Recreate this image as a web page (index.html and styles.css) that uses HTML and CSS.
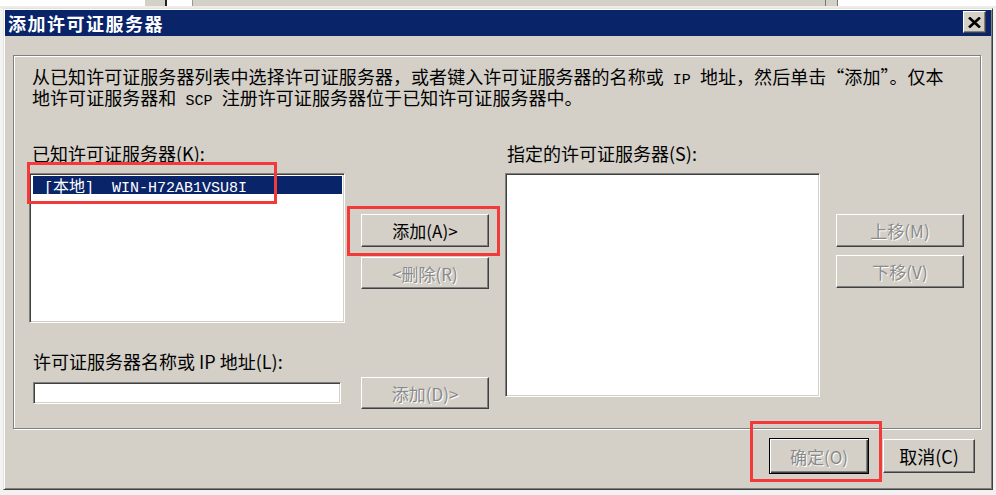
FILE: index.html
```html
<!DOCTYPE html>
<html lang="zh-CN">
<head>
<meta charset="utf-8">
<title>添加许可证服务器</title>
<link rel="stylesheet" href="styles.css">
</head>
<body>
<div class="bg-strip">
  <div class="s-white1"></div>
  <div class="s-gray1"></div>
  <div class="s-field"></div>
  <div class="s-gray2"></div>
  <div class="s-split"></div>
  <div class="s-white2"></div>
</div>
<div class="dialog">
  <div class="titlebar">
    <span class="title">添加许可证服务器</span>
    <button class="close" type="button" aria-label="关闭">
      <svg width="13" height="11" viewBox="0 0 13 11"><path d="M1 0.5 L12 10.5 M12 0.5 L1 10.5" stroke="#000" stroke-width="2.6" fill="none"/></svg>
    </button>
  </div>
  <div class="client">
    <div class="group">
      <div class="desc">
        <div class="desc-line">从已知许可证服务器列表中选择许可证服务器，或者键入许可证服务器的名称或<span class="m"> IP </span>地址，然后单击“添加”。仅本</div>
        <div class="desc-line">地许可证服务器和<span class="m"> SCP </span>注册许可证服务器位于已知许可证服务器中。</div>
      </div>
      <div class="cols">
        <div class="col col-left">
          <div class="label">已知许可证服务器(K):</div>
          <div class="listbox lb-left">
            <div class="item selected"><span class="m">[</span>本地<span class="m">]&nbsp;&nbsp;WIN-H72AB1VSU8I</span></div>
          </div>
          <div class="label label2">许可证服务器名称或 IP 地址(L):</div>
          <div class="textbox"></div>
        </div>
        <div class="col col-mid">
          <button class="btn b-add" type="button">添加(A)&gt;</button>
          <button class="btn disabled b-remove" type="button">&lt;删除(R)</button>
          <button class="btn disabled b-add2" type="button">添加(D)&gt;</button>
        </div>
        <div class="col col-right">
          <div class="label label-r">指定的许可证服务器(S):</div>
          <div class="listbox lb-right"></div>
        </div>
        <div class="col col-btns">
          <button class="btn disabled b-up" type="button">上移(M)</button>
          <button class="btn disabled b-down" type="button">下移(V)</button>
        </div>
      </div>
    </div>
    <div class="footer">
      <button class="btn default disabled" type="button">确定(O)</button>
      <button class="btn cancel" type="button">取消(C)</button>
    </div>
  </div>
</div>
<div class="mark mark-1"></div>
<div class="mark mark-2"></div>
<div class="mark mark-3"></div>
</body>
</html>
```
FILE: styles.css
```css
* { box-sizing: border-box; }
html, body { margin: 0; padding: 0; }
body {
  width: 996px;
  height: 495px;
  overflow: hidden;
  background: #f2f2f2;
  font-family: "Noto Sans CJK SC", "Noto Sans", sans-serif;
  font-size: 18px;
  color: #000;
  position: relative;
}

/* background window remnant */
.bg-strip {
  display: flex;
  height: 8px;
  background: #d4d0c8;
  border-bottom: 2px solid #ecebe6;
}
.s-white1 { width: 145px; height: 6px; background: #fff; }
.s-gray1 { width: 22px; height: 6px; background: #d4d0c8; border-right: 2px solid #222; }
.s-field { width: 26px; height: 6px; background: #fff; border-right: 1px solid #999; }
.s-gray2 { flex: 1; height: 6px; background: #d4d0c8; }
.s-split { width: 13px; height: 6px; border-left: 1px solid #777; border-right: 1px solid #777; background: #d4d0c8; }
.s-white2 { width: 158px; height: 6px; background: #fff; }

/* dialog frame */
.dialog {
  margin-left: 3px;
  width: 990px;
  height: 482px;
  background: #d4d0c8;
  border: 1px solid;
  border-color: #e6e3dd #404040 #404040 #e6e3dd;
  box-shadow: inset 1px 1px 0 #fff, inset -1px -1px 0 #808080;
  padding: 1px;
}

.titlebar {
  height: 26px;
  background: #0a246a;
  display: flex;
  justify-content: space-between;
  align-items: flex-start;
  padding: 0 5px 0 3px;
}
.title {
  color: #fff;
  font-weight: 700;
  font-size: 18px;
  letter-spacing: 1.5px;
  line-height: 26px;
}
.close {
  margin-top: 1px;
  width: 23px;
  height: 22px;
  padding: 0;
  background: #d4d0c8;
  border: 1px solid;
  border-color: #fff #404040 #404040 #fff;
  box-shadow: inset -1px -1px 0 #808080;
  display: flex;
  align-items: center;
  justify-content: center;
}
.close svg { display: block; }

.client {
  height: 452px;
  padding: 19px 0 0 8px;
}

/* etched group box */
.group {
  width: 968px;
  height: 374px;
  border: 1px solid #808080;
  box-shadow: 1px 1px 0 #fff, inset 1px 1px 0 #fff;
  padding: 10px 0 0 15px;
}

.desc {
  padding-left: 3px;
  height: 42px;
  display: flex;
  flex-direction: column;
}
.desc-line {
  height: 21px;
  line-height: 21px;
  white-space: nowrap;
  letter-spacing: 0.05px;
}
.m {
  font-family: "Liberation Mono", monospace;
  font-size: 15px;
  line-height: 1;
}

.cols {
  margin-top: 34px;
  display: flex;
  gap: 16px;
  align-items: flex-start;
}
.col { display: flex; flex-direction: column; align-items: flex-start; }
.col-left { width: 316px; }
.col-mid { width: 128px; }
.col-right { width: 315px; }
.col-btns { width: 128px; }

.label {
  height: 22px;
  line-height: 22px;
  padding-left: 3px;
  white-space: nowrap;
}
.label-r { padding-left: 2px; }
.label2 { margin-top: 27px; padding-left: 4px; }

.listbox {
  width: 100%;
  background: #fff;
  border: 1px solid;
  border-color: #808080 #fff #fff #808080;
  box-shadow: inset 1px 1px 0 #404040, inset -1px -1px 0 #d4d0c8;
  padding: 2px 2px 0 2px;
  margin-top: 9px;
}
.lb-left { height: 150px; }
.lb-right { height: 224px; }

.item {
  height: 18px;
  line-height: 18px;
  font-size: 16px;
  padding-left: 11px;
  margin-left: 1px;
  white-space: nowrap;
}
.item .m { font-size: 15px; }
.selected { background: #0a246a; color: #fff; }

.textbox {
  margin-top: 10px;
  margin-left: 4px;
  width: 308px;
  height: 22px;
  background: #fff;
  border: 1px solid;
  border-color: #808080 #fff #fff #808080;
  box-shadow: inset 1px 1px 0 #404040, inset -1px -1px 0 #d4d0c8;
}

/* push buttons */
.btn {
  font-family: "Noto Sans CJK SC", "Noto Sans", sans-serif;
  font-size: 17px;
  color: #000;
  background: #d4d0c8;
  border: 1px solid;
  border-color: #fff #404040 #404040 #fff;
  box-shadow: inset -1px -1px 0 #808080;
  padding: 0;
  width: 128px;
  height: 32px;
  line-height: 1;
  display: flex;
  align-items: center;
  justify-content: center;
  white-space: nowrap;
}
.btn.disabled {
  color: #8a8a8a;
  text-shadow: 1px 1px 0 #fff;
}
.b-add { margin-top: 72px; height: 33px; }
.b-remove { margin-top: 10px; }
.b-add2 { margin-top: 88px; }
.b-up { margin-top: 72px; height: 33px; }
.b-down { margin-top: 8px; height: 33px; }

.footer {
  margin-top: 9px;
  padding-right: 16px;
  display: flex;
  justify-content: flex-end;
  align-items: center;
  gap: 14px;
}
.btn.default {
  width: 100px;
  height: 36px;
  border: 1px solid #000;
  box-shadow: inset 1px 1px 0 #fff, inset -1px -1px 0 #404040, inset -2px -2px 0 #808080;
}
.btn.cancel {
  width: 92px;
  height: 34px;
  font-size: 18px;
}

/* red annotation rectangles */
.mark {
  position: absolute;
  border: 3px solid #f23a3a;
  pointer-events: none;
}
.mark-1 { left: 27px; top: 162px; width: 250px; height: 42px; }
.mark-2 { left: 347px; top: 206px; width: 153px; height: 50px; }
.mark-3 { left: 750px; top: 421px; width: 132px; height: 61px; }
```
